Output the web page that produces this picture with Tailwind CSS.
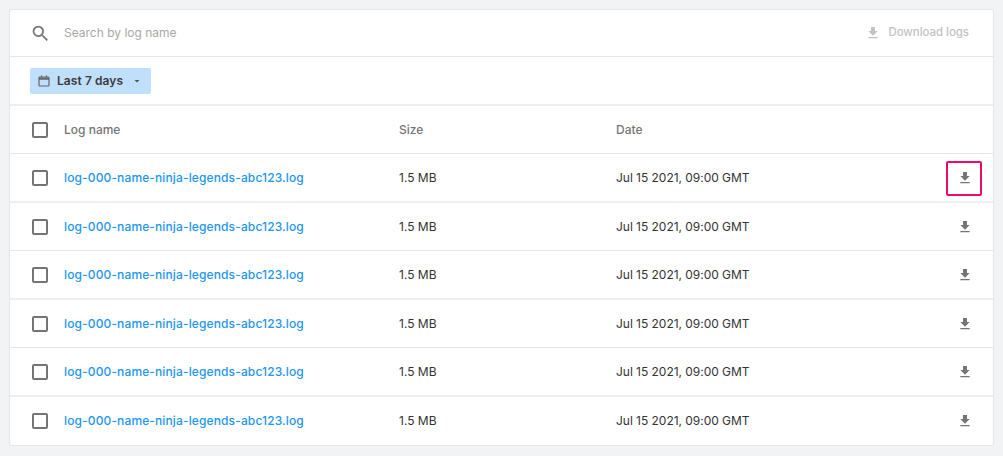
<!DOCTYPE html>
<html lang="en">
<head>
  <meta charset="UTF-8" />
  <title>Logs</title>
  <script src="https://cdn.jsdelivr.net/npm/@tailwindcss/browser@4"></script>
</head>
<body class="bg-[#f1f3f5] font-['Inter',sans-serif] h-[456px] overflow-hidden">
  <div class="pl-[9px] pr-[9px] pt-[9px]">
    <div class="bg-white rounded-[3px] border border-[#e4e6e8] h-[437px] overflow-hidden">
      <!-- Search -->
      <div class="flex items-center h-[47px] border-b border-[#e4e6e8] pl-[20px] pr-[24px]">
        <svg class="w-[21px] h-[21px] text-[#757575]" viewBox="0 0 24 24" fill="currentColor"><path d="M15.5 14h-.79l-.28-.27A6.47 6.47 0 0 0 16 9.5 6.5 6.5 0 1 0 9.5 16c1.61 0 3.09-.59 4.23-1.57l.27.28v.79l5 4.99L20.49 19l-4.99-5zm-6 0C7.01 14 5 11.99 5 9.5S7.01 5 9.5 5 14 7.01 14 9.5 11.99 14 9.5 14z"/></svg>
        <span class="ml-[13px] text-[12px] text-[#a8a8a8]">Search by log name</span>
        <div class="ml-auto flex items-center text-[#c2c2c2]">
          <svg class="w-[16px] h-[16px]" viewBox="0 0 24 24" fill="currentColor"><path d="M19 9h-4V3H9v6H5l7 7 7-7zM5 18v2h14v-2H5z"/></svg>
          <span class="ml-[7px] text-[11.4px] font-medium">Download logs</span>
        </div>
      </div>
      <!-- Filter -->
      <div class="flex items-center h-[49px] border-b-2 border-[#eeeff1] pl-[20px]">
        <button class="flex items-center h-[26px] w-[121px] bg-[#bfdffb] rounded-[2px] pl-[8px]">
          <svg class="w-[12px] h-[12px] text-[#666]" viewBox="0 0 12 12" fill="none" stroke="currentColor" stroke-width="1.2"><rect x="1" y="2" width="10" height="9" rx="1"/><path d="M1 3.700h10" stroke-width="2.200"/><path d="M3.500 .5v2M8.500 .5v2"/></svg>
          <span class="ml-[7px] text-[12px] font-semibold tracking-[0.08px] text-[#3a3a3a]">Last 7 days</span>
          <svg class="ml-[8px] w-[12px] h-[12px] text-[#555]" viewBox="0 0 24 24" fill="currentColor"><path d="M7 10l5 5 5-5z"/></svg>
        </button>
      </div>
      <!-- Header -->
      <div class="flex items-center h-[48px] border-b border-[#e4e6e8] pl-[22px] text-[12px] font-medium text-[#757575]">
        <span class="w-[16px] h-[16px] rounded-[2px] border-2 border-[#757575]"></span>
        <span class="ml-[16px] w-[335px]">Log name</span>
        <span class="w-[217px]">Size</span>
        <span>Date</span>
      </div>
      <!-- Rows -->
      <div class="flex items-center h-[49px] pt-[1px] border-b-2 border-[#eeeff1] pl-[22px] pr-[11px] text-[12px] text-[#333]">
        <span class="w-[16px] h-[16px] rounded-[2px] border-2 border-[#757575]"></span>
        <a class="ml-[16px] w-[335px] font-medium tracking-[0.13px] text-[#2196f3]">log-000-name-ninja-legends-abc123.log</a>
        <span class="w-[217px]">1.5 MB</span>
        <span class="tracking-[-0.03px]">Jul 15 2021, 09:00 GMT</span>
        <span class="ml-auto flex items-center justify-center w-[36px] h-[35px] rounded-[2px] border-2 border-[#f0086a]">
          <svg class="w-[16px] h-[16px] ml-[2px] text-[#757575]" viewBox="0 0 24 24" fill="currentColor"><path d="M19 9h-4V3H9v6H5l7 7 7-7zM5 18v2h14v-2H5z"/></svg>
        </span>
      </div>
      <div class="flex items-center h-[48px] pt-[1px] border-b border-[#e4e6e8] pl-[22px] pr-[11px] text-[12px] text-[#333]">
        <span class="w-[16px] h-[16px] rounded-[2px] border-2 border-[#757575]"></span>
        <a class="ml-[16px] w-[335px] font-medium tracking-[0.13px] text-[#2196f3]">log-000-name-ninja-legends-abc123.log</a>
        <span class="w-[217px]">1.5 MB</span>
        <span class="tracking-[-0.03px]">Jul 15 2021, 09:00 GMT</span>
        <span class="ml-auto flex items-center justify-center w-[36px] h-[35px]">
          <svg class="w-[16px] h-[16px] ml-[2px] text-[#757575]" viewBox="0 0 24 24" fill="currentColor"><path d="M19 9h-4V3H9v6H5l7 7 7-7zM5 18v2h14v-2H5z"/></svg>
        </span>
      </div>
      <div class="flex items-center h-[49px] pt-[1px] border-b-2 border-[#eeeff1] pl-[22px] pr-[11px] text-[12px] text-[#333]">
        <span class="w-[16px] h-[16px] rounded-[2px] border-2 border-[#757575]"></span>
        <a class="ml-[16px] w-[335px] font-medium tracking-[0.13px] text-[#2196f3]">log-000-name-ninja-legends-abc123.log</a>
        <span class="w-[217px]">1.5 MB</span>
        <span class="tracking-[-0.03px]">Jul 15 2021, 09:00 GMT</span>
        <span class="ml-auto flex items-center justify-center w-[36px] h-[35px]">
          <svg class="w-[16px] h-[16px] ml-[2px] text-[#757575]" viewBox="0 0 24 24" fill="currentColor"><path d="M19 9h-4V3H9v6H5l7 7 7-7zM5 18v2h14v-2H5z"/></svg>
        </span>
      </div>
      <div class="flex items-center h-[48px] pt-[1px] border-b border-[#e4e6e8] pl-[22px] pr-[11px] text-[12px] text-[#333]">
        <span class="w-[16px] h-[16px] rounded-[2px] border-2 border-[#757575]"></span>
        <a class="ml-[16px] w-[335px] font-medium tracking-[0.13px] text-[#2196f3]">log-000-name-ninja-legends-abc123.log</a>
        <span class="w-[217px]">1.5 MB</span>
        <span class="tracking-[-0.03px]">Jul 15 2021, 09:00 GMT</span>
        <span class="ml-auto flex items-center justify-center w-[36px] h-[35px]">
          <svg class="w-[16px] h-[16px] ml-[2px] text-[#757575]" viewBox="0 0 24 24" fill="currentColor"><path d="M19 9h-4V3H9v6H5l7 7 7-7zM5 18v2h14v-2H5z"/></svg>
        </span>
      </div>
      <div class="flex items-center h-[49px] pt-[1px] border-b-2 border-[#eeeff1] pl-[22px] pr-[11px] text-[12px] text-[#333]">
        <span class="w-[16px] h-[16px] rounded-[2px] border-2 border-[#757575]"></span>
        <a class="ml-[16px] w-[335px] font-medium tracking-[0.13px] text-[#2196f3]">log-000-name-ninja-legends-abc123.log</a>
        <span class="w-[217px]">1.5 MB</span>
        <span class="tracking-[-0.03px]">Jul 15 2021, 09:00 GMT</span>
        <span class="ml-auto flex items-center justify-center w-[36px] h-[35px]">
          <svg class="w-[16px] h-[16px] ml-[2px] text-[#757575]" viewBox="0 0 24 24" fill="currentColor"><path d="M19 9h-4V3H9v6H5l7 7 7-7zM5 18v2h14v-2H5z"/></svg>
        </span>
      </div>
      <div class="flex items-center h-[47px] pt-[1px] pl-[22px] pr-[11px] text-[12px] text-[#333]">
        <span class="w-[16px] h-[16px] rounded-[2px] border-2 border-[#757575]"></span>
        <a class="ml-[16px] w-[335px] font-medium tracking-[0.13px] text-[#2196f3]">log-000-name-ninja-legends-abc123.log</a>
        <span class="w-[217px]">1.5 MB</span>
        <span class="tracking-[-0.03px]">Jul 15 2021, 09:00 GMT</span>
        <span class="ml-auto flex items-center justify-center w-[36px] h-[35px]">
          <svg class="w-[16px] h-[16px] ml-[2px] text-[#757575]" viewBox="0 0 24 24" fill="currentColor"><path d="M19 9h-4V3H9v6H5l7 7 7-7zM5 18v2h14v-2H5z"/></svg>
        </span>
      </div>
    </div>
  </div>
</body>
</html>
